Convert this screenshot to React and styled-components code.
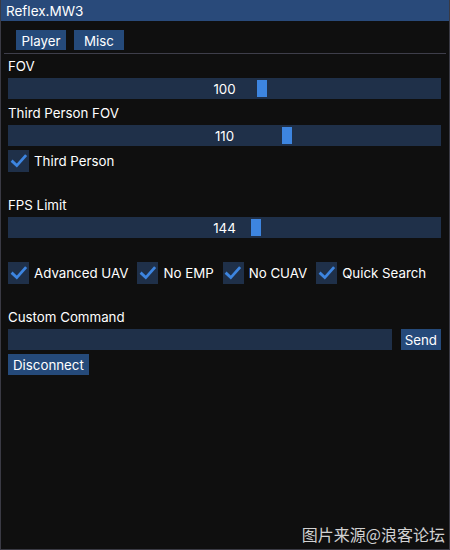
import React from "react";
import styled, { createGlobalStyle } from "styled-components";

const GlobalStyle = createGlobalStyle`
  html, body {
    margin: 0;
    padding: 0;
    background: #0f0f0f;
  }
  * {
    box-sizing: border-box;
  }
`;

export const Window = styled.div`
  position: relative;
  width: 450px;
  height: 550px;
  background: #0f0f0f;
  border: 1px solid #3a3a44;
  border-top: none;
  font-family: "Inter", "Noto Sans", sans-serif;
  font-size: 13.3px;
  color: #ffffff;
  overflow: hidden;
`;

export const TitleBar = styled.div`
  height: 21px;
  margin: 0 -1px;
  padding: 0 6px;
  background: #294a7a;
  display: flex;
  align-items: center;
  font-size: 13.5px;
`;

export const TabBar = styled.div`
  display: flex;
  gap: 8px;
  padding: 9px 0 0 15px;
`;

export const Button = styled.div`
  height: ${(p) => p.$h || 20}px;
  width: ${(p) => (p.$w ? `${p.$w}px` : "auto")};
  padding: 0 ${(p) => p.$px ?? 5}px;
  padding-top: 1px;
  background: #254a7a;
  display: flex;
  align-items: center;
  justify-content: center;
  color: #ffffff;
  white-space: nowrap;
`;

export const Separator = styled.div`
  height: 1px;
  margin: 3px 3px 0 3px;
  background: #3e3e4a;
`;

export const Content = styled.div`
  display: flex;
  flex-direction: column;
  gap: 4px;
  padding: 2px 8px 0 7px;
`;

export const Label = styled.div`
  height: 18px;
  line-height: 20px;
`;

export const Spacer = styled.div`
  height: ${(p) => p.$h}px;
`;

export const Frame = styled.div`
  position: relative;
  height: 21px;
  background: #1f3049;
`;

export const SliderValue = styled.div`
  height: 100%;
  display: flex;
  align-items: center;
  justify-content: center;
`;

export const Grab = styled.div`
  position: absolute;
  top: 2px;
  width: 10px;
  height: 17px;
  background: #3d85e0;
`;

export const CheckRow = styled.div`
  display: flex;
  align-items: center;
  gap: 9px;
`;

export const CheckItem = styled.div`
  display: flex;
  align-items: center;
  gap: 5px;
`;

export const Box = styled.div`
  width: 21px;
  height: 22px;
  background: #1f3049;
  display: flex;
  align-items: center;
  justify-content: center;
`;

export const InputRow = styled.div`
  display: flex;
  gap: 9px;
`;

export const Input = styled.div`
  flex: 1;
  height: 21px;
  background: #1f3049;
`;

export const Watermark = styled.div`
  position: absolute;
  right: 4px;
  bottom: 3px;
  font-family: "Noto Sans CJK SC", sans-serif;
  font-size: 16px;
  color: #d2d2d2;
`;

const CheckIcon = () => (
  <svg width={18} height={18} viewBox="0 0 18 18" fill="none">
    <path
      d="M2.6 9.6 L6.8 13.6 L15.2 4.2"
      stroke="#3d85e0"
      strokeWidth={2.8}
      strokeLinecap="square"
    />
  </svg>
);

const Slider = ({ value, grab }) => (
  <Frame>
    <SliderValue>{value}</SliderValue>
    <Grab style={{ left: grab }} />
  </Frame>
);

const Checkbox = ({ label }) => (
  <CheckItem>
    <Box>
      <CheckIcon />
    </Box>
    {label}
  </CheckItem>
);

export default function App() {
  return (
    <>
      <GlobalStyle />
      <Window>
        <TitleBar>Reflex.MW3</TitleBar>
        <TabBar>
          <Button $w={50}>Player</Button>
          <Button $w={50}>Misc</Button>
        </TabBar>
        <Separator />
        <Content>
          <Label>FOV</Label>
          <Slider value="100" grab={249} />
          <Label>Third Person FOV</Label>
          <Slider value="110" grab={274} />
          <CheckRow>
            <Checkbox label="Third Person" />
          </CheckRow>
          <Spacer $h={15} />
          <Label>FPS Limit</Label>
          <Slider value="144" grab={243} />
          <Spacer $h={16} />
          <CheckRow>
            <Checkbox label="Advanced UAV" />
            <Checkbox label="No EMP" />
            <Checkbox label="No CUAV" />
            <Checkbox label="Quick Search" />
          </CheckRow>
          <Spacer $h={15} />
          <Label>Custom Command</Label>
          <InputRow>
            <Input />
            <Button $h={21} $px={4}>
              Send
            </Button>
          </InputRow>
          <div style={{ display: "flex" }}>
            <Button $h={21} $px={5}>
              Disconnect
            </Button>
          </div>
        </Content>
        <Watermark>图片来源@浪客论坛</Watermark>
      </Window>
    </>
  );
}
